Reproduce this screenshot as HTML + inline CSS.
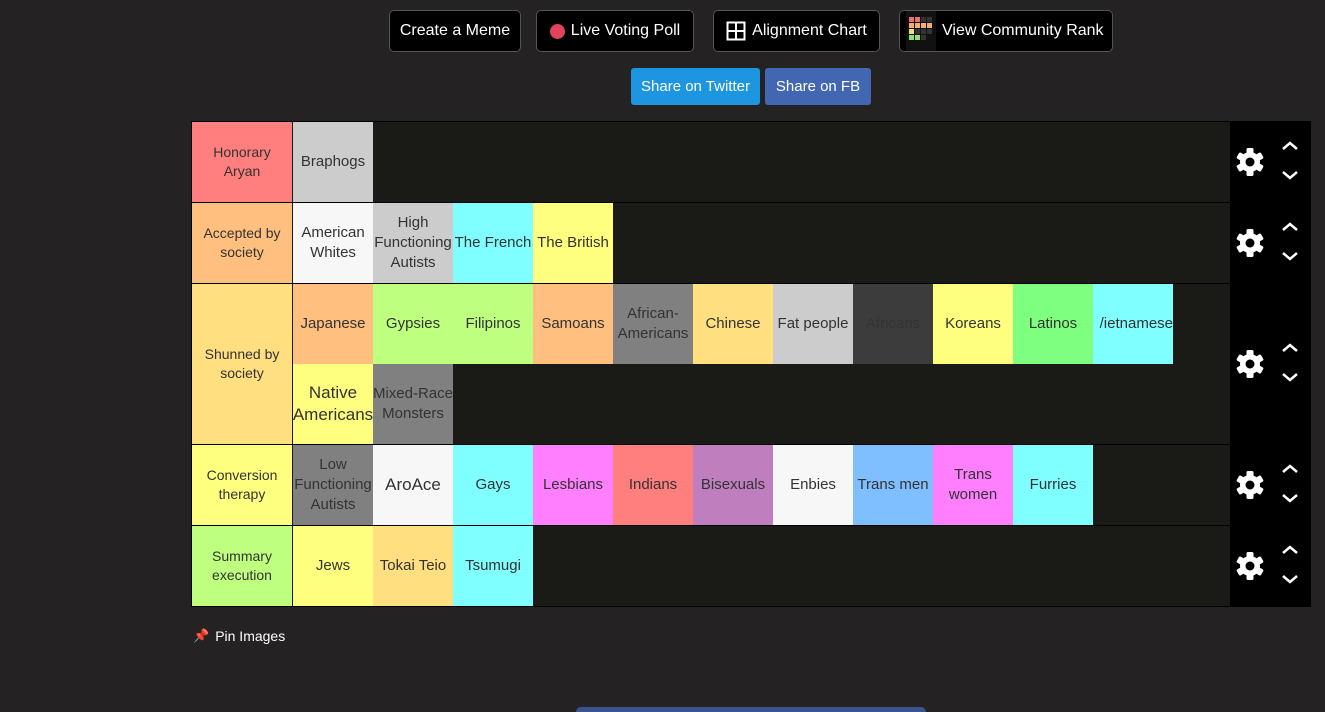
<!DOCTYPE html>
<html style="overflow:hidden;height:712px"><head><meta charset="utf-8"><style>
*{margin:0;padding:0;box-sizing:border-box}
body{width:1325px;height:712px;background:#242223;font-family:"Liberation Sans",sans-serif;position:relative;overflow:hidden}
.btn{position:absolute;top:10px;height:42px;background:#000;border:1px solid #555;border-radius:5px;color:#fff;font-size:16px;display:flex;align-items:center;justify-content:center;gap:6px}
.sh{position:absolute;top:68px;height:37px;color:#fff;font-size:15px;border-radius:3px;display:flex;align-items:center;justify-content:center}
.tbl{position:absolute;left:191px;top:121px;width:1120px;height:486px;background:#000}
.row{position:absolute;left:1px;width:1038px;background:#1a1a17}
.lab{position:absolute;left:0;top:0;width:100px;height:100%;display:flex;align-items:center;justify-content:center;text-align:center;font-size:14px;color:#333;line-height:19px}
.it{position:absolute;width:80px;height:80px;display:flex;align-items:center;justify-content:center;text-align:center;font-size:15px;color:#333;line-height:20px;overflow:hidden;white-space:normal}
</style></head><body>
<div class="btn" style="left:389px;width:132px">Create a Meme</div>
<div class="btn" style="left:536px;width:158px"><span style="width:15px;height:15px;border-radius:50%;background:#e0435a;display:inline-block"></span>Live Voting Poll</div>
<div class="btn" style="left:713px;width:167px"><svg width="20" height="20" viewBox="0 0 20 20"><rect x="1.5" y="1.5" width="17" height="17" fill="none" stroke="#fff" stroke-width="2"/><path d="M10 1.5V18.5M1.5 10H18.5" stroke="#fff" stroke-width="2"/></svg>Alignment Chart</div>
<div class="btn" style="left:899px;width:214px;justify-content:flex-start;padding-left:6px"><svg width="30" height="40" viewBox="0 0 30 40" style="background:#111"><g><rect x="3" y="6" width="5" height="5" fill="#e57373"/><rect x="9" y="6" width="5" height="5" fill="#e57373"/><rect x="15" y="6" width="5" height="5" fill="#333"/><rect x="21" y="6" width="5" height="5" fill="#333"/><rect x="3" y="12" width="5" height="5" fill="#f0b070"/><rect x="9" y="12" width="5" height="5" fill="#f0b070"/><rect x="15" y="12" width="5" height="5" fill="#f0b070"/><rect x="21" y="12" width="5" height="5" fill="#f0b070"/><rect x="3" y="18" width="5" height="5" fill="#f0e070"/><rect x="9" y="18" width="5" height="5" fill="#333"/><rect x="15" y="18" width="5" height="5" fill="#333"/><rect x="21" y="18" width="5" height="5" fill="#333"/><rect x="3" y="24" width="5" height="5" fill="#90e070"/><rect x="9" y="24" width="5" height="5" fill="#90e070"/><rect x="15" y="24" width="5" height="5" fill="#333"/></g></svg>View Community Rank</div>
<div class="sh" style="left:631px;width:129px;background:#1d95e0">Share on Twitter</div>
<div class="sh" style="left:765px;width:106px;background:#4267b2">Share on FB</div>

<div class="tbl">
<div class="row" style="top:1px;height:80px">
<div class="lab" style="background:#ff7f7f">Honorary<br>Aryan</div>
<div class="it" style="left:101px;top:0;background:#ccc">Braphogs</div>
</div>
<div class="row" style="top:82px;height:80px">
<div class="lab" style="background:#ffbf7f">Accepted by<br>society</div>
<div class="it" style="left:101px;background:#f7f7f7">American Whites</div>
<div class="it" style="left:181px;background:#ccc;white-space:nowrap">High<br>Functioning<br>Autists</div>
<div class="it" style="left:261px;background:#7fffff;white-space:nowrap">The French</div>
<div class="it" style="left:341px;background:#ffff7f;white-space:nowrap">The British</div>
</div>
<div class="row" style="top:163px;height:160px">
<div class="lab" style="background:#ffdf7f">Shunned by<br>society</div>
<div class="it" style="left:101px;background:#ffbf7f">Japanese</div>
<div class="it" style="left:181px;background:#bfff7f">Gypsies</div>
<div class="it" style="left:261px;background:#bfff7f">Filipinos</div>
<div class="it" style="left:341px;background:#ffbf7f">Samoans</div>
<div class="it" style="left:421px;background:#808080;white-space:nowrap">African-<br>Americans</div>
<div class="it" style="left:501px;background:#ffdf7f">Chinese</div>
<div class="it" style="left:581px;background:#ccc;white-space:nowrap">Fat people</div>
<div class="it" style="left:661px;background:#3c3c3c">Africans</div>
<div class="it" style="left:741px;background:#ffff7f">Koreans</div>
<div class="it" style="left:821px;background:#7fff7f">Latinos</div>
<div class="it" style="left:901px;background:#7fffff;white-space:nowrap;justify-content:flex-end">/ietnamese</div>
<div class="it" style="left:101px;top:80px;background:#ffff7f;font-size:17px;line-height:22px;white-space:nowrap">Native<br>Americans</div>
<div class="it" style="left:181px;top:80px;background:#808080;white-space:nowrap">Mixed-Race<br>Monsters</div>
</div>
<div class="row" style="top:324px;height:80px">
<div class="lab" style="background:#ffff7f">Conversion<br>therapy</div>
<div class="it" style="left:101px;background:#808080;white-space:nowrap">Low<br>Functioning<br>Autists</div>
<div class="it" style="left:181px;background:#f7f7f7;font-size:17px">AroAce</div>
<div class="it" style="left:261px;background:#7fffff">Gays</div>
<div class="it" style="left:341px;background:#ff7fff">Lesbians</div>
<div class="it" style="left:421px;background:#ff7f7f">Indians</div>
<div class="it" style="left:501px;background:#bf7fbf">Bisexuals</div>
<div class="it" style="left:581px;background:#f7f7f7">Enbies</div>
<div class="it" style="left:661px;background:#7fbfff;white-space:nowrap">Trans men</div>
<div class="it" style="left:741px;background:#ff7fff">Trans women</div>
<div class="it" style="left:821px;background:#7fffff">Furries</div>
</div>
<div class="row" style="top:405px;height:80px">
<div class="lab" style="background:#bfff7f">Summary<br>execution</div>
<div class="it" style="left:101px;background:#ffff7f">Jews</div>
<div class="it" style="left:181px;background:#ffdf7f">Tokai Teio</div>
<div class="it" style="left:261px;background:#7fffff">Tsumugi</div>
</div>
</div>

<svg style="position:absolute;left:0;top:0" width="1325" height="712">
<defs>
<g id="ctl">
<g transform="translate(1250,0)" fill="#fff">
<circle r="10"/>
<rect x="-3.5" y="-14" width="7" height="28" rx="1.5"/>
<rect x="-3.5" y="-14" width="7" height="28" rx="1.5" transform="rotate(60)"/>
<rect x="-3.5" y="-14" width="7" height="28" rx="1.5" transform="rotate(120)"/>
<circle r="4.5" fill="#000"/>
</g>
<path d="M1283 -13L1290 -19L1297 -13M1283 10L1290 16L1297 10" stroke="#fff" stroke-width="2.5" fill="none"/>
</g>
</defs>
<use href="#ctl" y="162"/>
<use href="#ctl" y="243"/>
<use href="#ctl" y="364"/>
<use href="#ctl" y="485"/>
<use href="#ctl" y="566"/>
</svg>

<div style="position:absolute;left:193px;top:628px;color:#fff;font-size:14px;display:flex;align-items:center;gap:6px"><span style="color:#e0435a;font-size:13px">📌</span>Pin Images</div>
<div style="position:absolute;left:576px;top:707px;width:350px;height:5px;background:#3b5490;border-radius:6px 6px 0 0"></div>
</body></html>
